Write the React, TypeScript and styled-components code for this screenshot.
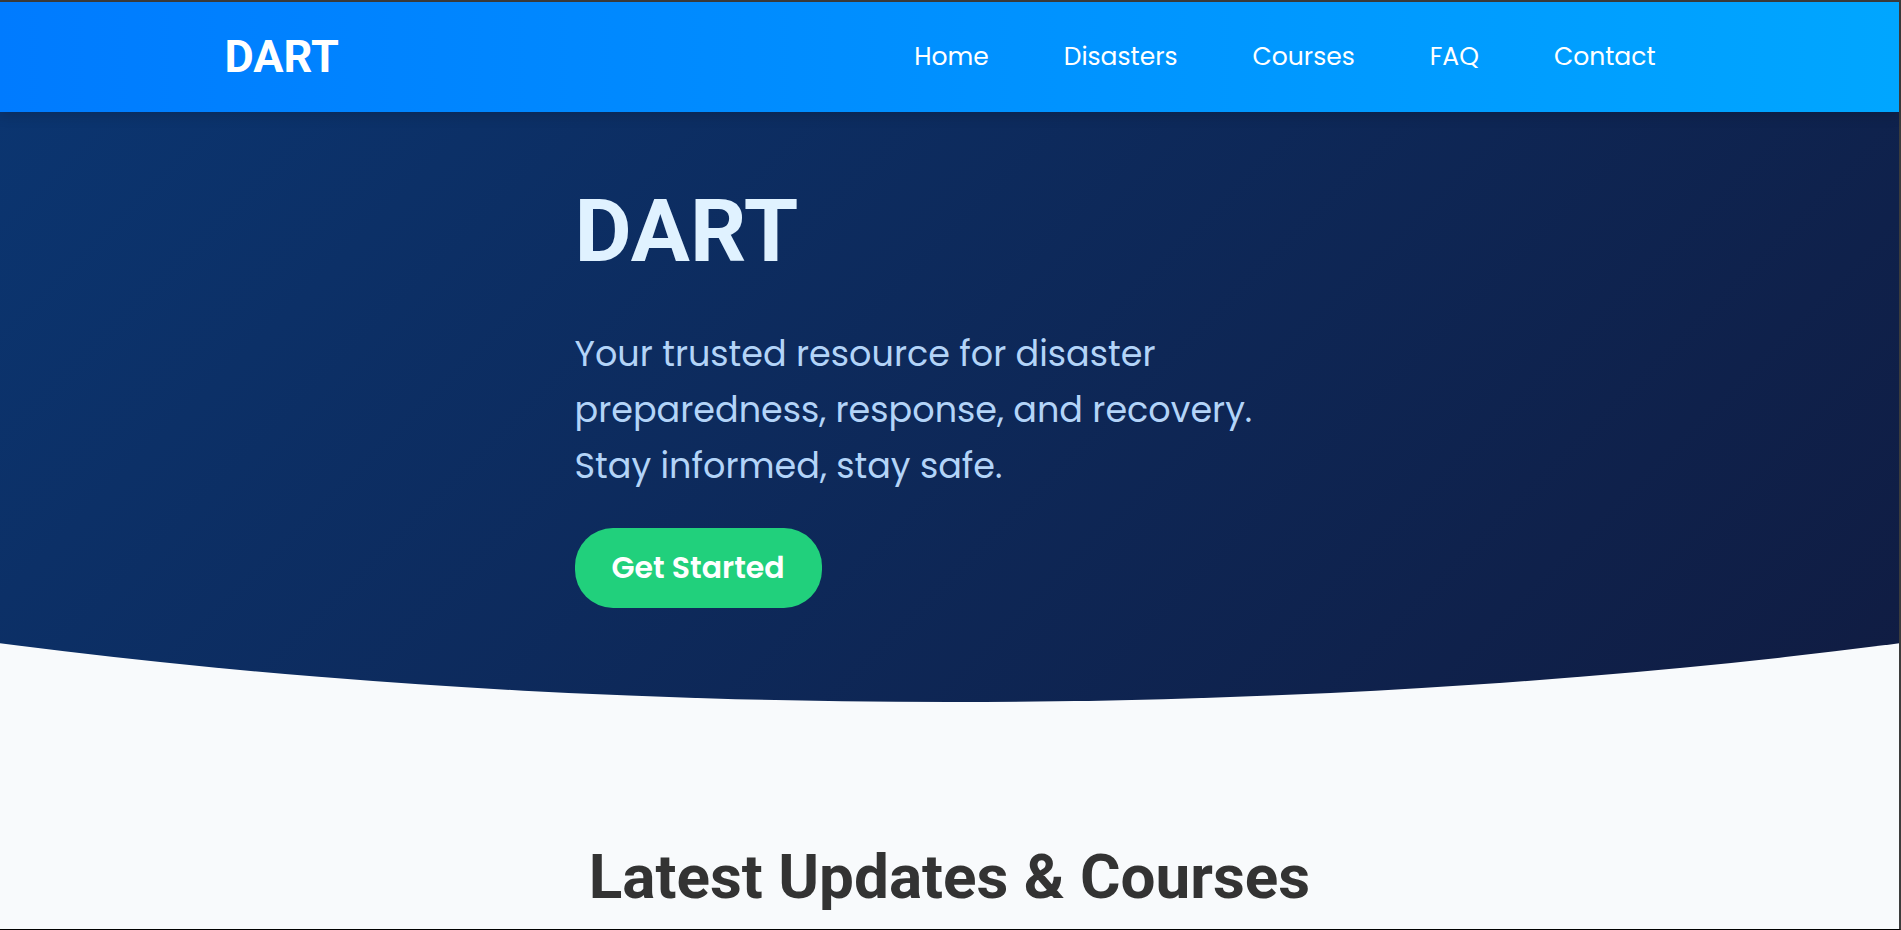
import React from "react";
import styled, { createGlobalStyle } from "styled-components";

const GlobalStyle = createGlobalStyle`
  *, *::before, *::after { box-sizing: border-box; }
  body {
    margin: 0;
    background: #f8fafc;
    color: #333;
    font-family: Poppins, Inter, "Open Sans", sans-serif;
  }
`;

const Page = styled.div`
  min-height: 100vh;
  border-top: 2px solid #3c3c3c;
  border-right: 2px solid #3c3c3c;
  border-bottom: 1px solid #000;
`;

const Header = styled.header`
  position: relative;
  z-index: 1;
  background: linear-gradient(90deg, #007bff, #00a6ff);
  box-shadow: 0 4px 12px rgba(0, 0, 0, 0.15);
`;

const HeaderInner = styled.div`
  display: flex;
  align-items: center;
  justify-content: space-between;
  max-width: 1450px;
  min-height: 110px;
  margin: 0 auto;
`;

const Logo = styled.a`
  color: #fff;
  font: 700 45px/56px Roboto, sans-serif;
  text-decoration: none;
`;

const NavList = styled.ul`
  display: flex;
  gap: 37px;
  margin: 0;
  padding: 0;
  list-style: none;
`;

const NavLink = styled.a`
  display: block;
  padding: 0 19px;
  color: #fff;
  font-size: 25px;
  line-height: 40px;
  text-decoration: none;
`;

const Hero = styled.section`
  padding: 67px 0 94px;
  background: linear-gradient(135deg, #0b3570, #101c42);
  clip-path: ellipse(115% 100% at 50% 0);
`;

const HeroInner = styled.div`
  max-width: 750px;
  margin: 0 auto;
`;

const HeroTitle = styled.h1`
  margin: 0 0 43px;
  color: #e0f2ff;
  font: 700 88px/104px Roboto, sans-serif;
`;

const HeroText = styled.p`
  margin: 0 0 34px;
  color: #b3d4f8;
  font-size: 35px;
  line-height: 56px;
`;

const StartButton = styled.button`
  display: block;
  padding: 20px 37px;
  border: 0;
  border-radius: 38px;
  background: #21d07c;
  color: #fff;
  font-family: inherit;
  font-size: 30px;
  font-weight: 600;
  line-height: 40px;
  cursor: pointer;
`;

const Updates = styled.section`
  padding: 138px 0 15px;
`;

const SectionTitle = styled.h2`
  margin: 0;
  font: 700 62px/74px Roboto, sans-serif;
  text-align: center;
`;

const links = ["Home", "Disasters", "Courses", "FAQ", "Contact"];

export default function App() {
  return (
    <>
      <GlobalStyle />
      <Page>
        <Header>
          <HeaderInner>
            <Logo href="#home">DART</Logo>
            <nav aria-label="Main">
              <NavList>
                {links.map((label) => (
                  <li key={label}>
                    <NavLink href={`#${label.toLowerCase()}`}>{label}</NavLink>
                  </li>
                ))}
              </NavList>
            </nav>
          </HeaderInner>
        </Header>
        <main>
          <Hero id="home">
            <HeroInner>
              <HeroTitle>DART</HeroTitle>
              <HeroText>
                Your trusted resource for disaster preparedness, response, and
                recovery. Stay informed, stay safe.
              </HeroText>
              <StartButton type="button">Get Started</StartButton>
            </HeroInner>
          </Hero>
          <Updates id="courses">
            <SectionTitle>Latest Updates &amp; Courses</SectionTitle>
          </Updates>
        </main>
      </Page>
    </>
  );
}
